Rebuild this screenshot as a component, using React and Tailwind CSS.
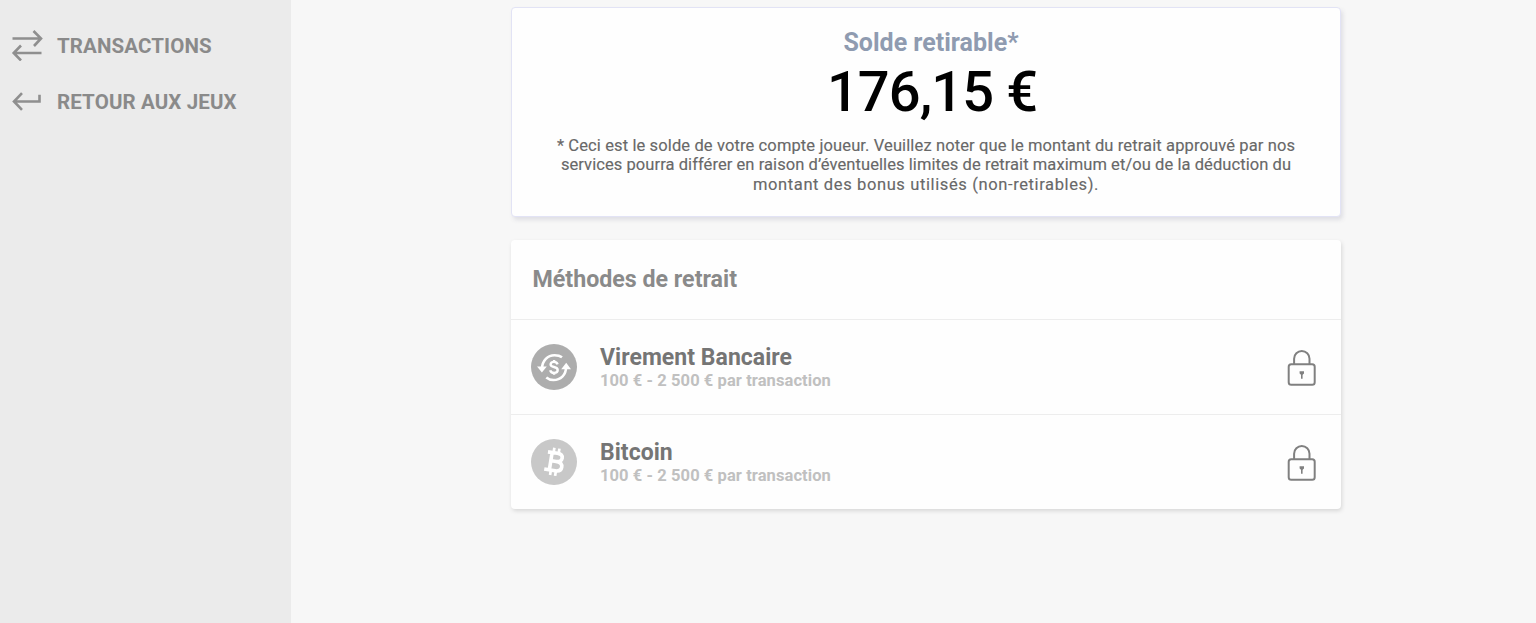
import React from "react";

function TransferIcon() {
  return (
    <svg width="32" height="32" viewBox="0 0 32 32" fill="none" stroke="#8f8f8f" strokeWidth="2.6" className="shrink-0">
      <path d="M1.500 9.500H29.500M22.500 2L30 9.500L23 17M30.500 24H3M10 16.500L2.700 24L10 31.500" />
    </svg>
  );
}

function ReturnIcon() {
  return (
    <svg width="32" height="20" viewBox="0 0 32 20" fill="none" stroke="#8f8f8f" strokeWidth="2.6" className="shrink-0">
      <path d="M3 10.500H28.500V3.800M11 2.200L3 10.500L11 18.800" />
    </svg>
  );
}

function BankIcon() {
  return (
    <svg width="46" height="46" viewBox="0 0 46 46" className="shrink-0">
      <circle cx="23" cy="23" r="23" fill="#adadad" />
      <g fill="none" stroke="#fff" strokeWidth="2.6">
        <path d="M11 25C11 16.500 17 11.300 23.500 11.300C26.500 11.300 29 11.800 31 13.300" />
        <path d="M35 23.500C35 31 29.500 36 22.500 36C19.800 36 17.300 35.200 15.300 33.500" />
        <path d="M26.600 20.300C26 18.600 24.800 17.900 23 17.900C20.900 17.900 19.600 19 19.600 20.500C19.600 24.100 26.700 21.900 26.700 26.100C26.700 27.800 25.200 28.900 23.200 28.900C21.100 28.900 19.600 28 19.200 26.200M23.100 16V18M23.100 28.800V30.800" strokeWidth="2.400" />
      </g>
      <path d="M6 22.500H15.800L10.900 28.500ZM30.200 25.200H40L35.200 18.800Z" fill="#fff" />
    </svg>
  );
}

function BitcoinIcon() {
  return (
    <svg width="46" height="46" viewBox="0 0 46 46" className="shrink-0">
      <circle cx="23" cy="23" r="23" fill="#c8c8c8" />
      <g transform="translate(23.500 22.800) rotate(9)" fill="none" stroke="#fff">
        <path d="M-8 -8.800H1.500C5.300 -8.800 7 -7.200 7 -4.800C7 -2.200 5 -0.500 1.500 -0.500H-3M1.500 -0.500C6 -0.500 8 1.500 8 4.300C8 7.200 6 8.800 2 8.800H-9M-3.800 -8.800V8.800" strokeWidth="3.600" />
        <path d="M-2.300 -13.800V-9M2.800 -13.800V-9M-2.300 9V13.800M2.800 9V13.800" strokeWidth="2.700" />
      </g>
    </svg>
  );
}

function LockIcon() {
  return (
    <svg width="30" height="38" viewBox="0 0 30 38" fill="none" stroke="#808080" strokeWidth="2" className="shrink-0">
      <rect x="1.700" y="16.300" width="26" height="20.500" rx="2.500" />
      <path d="M7.100 16.300V10.700A7.700 7.700 0 0 1 22.500 10.700V16.300" />
      <path d="M14.800 24V30.800" strokeWidth="1.600" />
      <path d="M12.600 23.300H17V25.500L15.600 26.700H14L12.600 25.500Z" fill="#808080" stroke="none" />
    </svg>
  );
}

function Method({ icon, name }) {
  return (
    <div className="flex h-[95px] items-center border-t border-[#ededed] pl-5 pr-6">
      {icon}
      <div className="ml-[23px] flex-1">
        <div className="pt-px text-[23px] leading-[26px] font-bold tracking-[0.04px] text-[#757575]"><span>{name}</span></div>
        <div className="text-[16.500px] leading-[19px] font-bold tracking-[0.08px] text-[#c0c0c0]"><span>100 € - 2 500 € par transaction</span></div>
      </div>
      <LockIcon />
    </div>
  );
}

export default function App() {
  return (
    <div className="flex h-[623px] w-[1536px] overflow-hidden bg-[#f7f7f7] font-['Roboto',sans-serif] whitespace-nowrap">
      <aside className="w-[291px] shrink-0 bg-[#ebebeb] pt-[29px] pl-[11px] text-[20.500px] font-bold tracking-[0.12px] text-[#8a8a8a]">
        <div className="flex h-8 items-center gap-[14px]">
          <TransferIcon />
          <span className="pt-0.5">TRANSACTIONS</span>
        </div>
        <div className="mt-6 flex h-8 items-center gap-[14px]">
          <ReturnIcon />
          <span className="pt-0.5">RETOUR AUX JEUX</span>
        </div>
      </aside>
      <main className="ml-[220px] w-[830px] pt-[7px]">
        <section className="h-[210px] rounded-[4px] border border-[#e2e3f5] bg-[#fefefe] pt-[21px] text-center shadow-[2px_3px_4px_rgba(70,70,110,0.13)]">
          <h2 className="pl-[10px] text-[25px] leading-7 font-bold text-[#8f9bb0]"><span>Solde retirable*</span></h2>
          <div className="pt-px pl-[12px] text-[56px] leading-[68px] font-medium tracking-[-0.9px] text-black"><span>176,15 €</span></div>
          <div className="mt-[9.500px] text-[16.500px] leading-[19.700px] text-[#686868] [-webkit-text-stroke:0.15px_#686868]">
            <div><span className="tracking-[0.12px]">* Ceci est le solde de votre compte joueur. Veuillez noter que le montant du retrait approuvé par nos</span></div>
            <div><span className="tracking-[0.07px]">services pourra différer en raison d’éventuelles limites de retrait maximum et/ou de la déduction du</span></div>
            <div><span className="tracking-[0.62px]">montant des bonus utilisés (non-retirables).</span></div>
          </div>
        </section>
        <section className="mt-[23px] h-[269px] rounded-[4px] bg-[#fefefe] shadow-[1px_2px_4px_rgba(0,0,0,0.13)]">
          <h2 className="flex h-[79px] items-center pl-[21.500px] text-[23.200px] font-bold text-[#8a8a8a]"><span>Méthodes de retrait</span></h2>
          <Method icon={<BankIcon />} name="Virement Bancaire" />
          <Method icon={<BitcoinIcon />} name="Bitcoin" />
        </section>
      </main>
    </div>
  );
}
